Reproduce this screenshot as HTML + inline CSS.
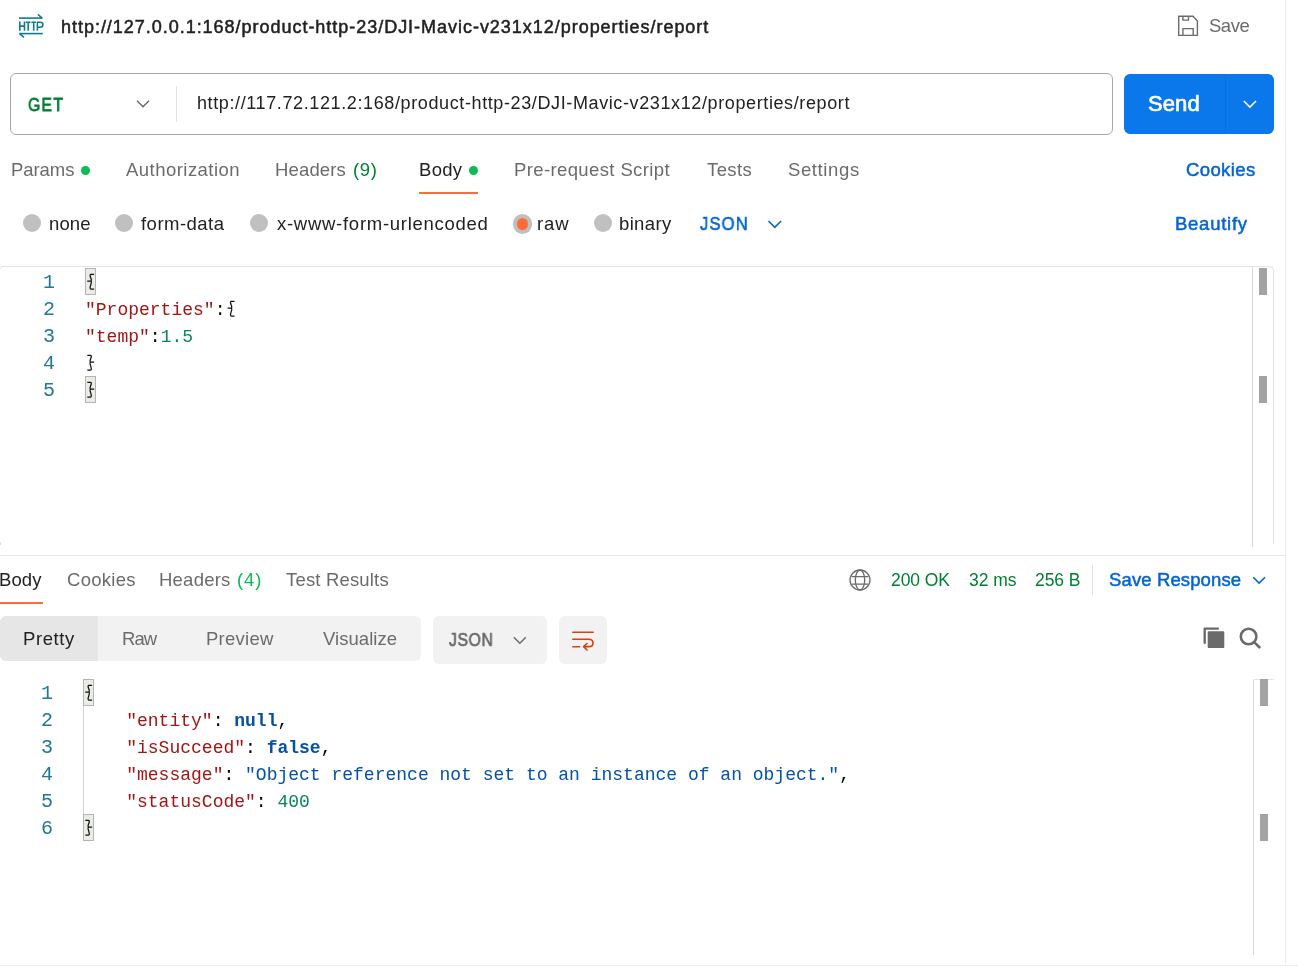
<!DOCTYPE html>
<html><head><meta charset="utf-8"><title>Postman</title><style>
html,body{margin:0;padding:0;}
body{width:1298px;height:969px;overflow:hidden;background:#fff;position:relative;font-family:'Liberation Sans',sans-serif;}
.a{position:absolute;white-space:pre;will-change:transform;}
.box{position:absolute;box-sizing:border-box;}
.code{position:absolute;font-family:'Liberation Mono',monospace;font-size:18px;line-height:27px;white-space:pre;color:#000;will-change:transform;}
.num{position:absolute;font-family:'Liberation Mono',monospace;font-size:20px;line-height:27px;white-space:pre;color:#237893;text-align:center;will-change:transform;}
.k{color:#a31515;}
.n{color:#098658;}
.s{color:#0451a5;}
.b{color:#0451a5;font-weight:bold;}
.br{position:absolute;background:#e9ede6;border:1px solid #b4b4b4;box-sizing:border-box;}
.dot{position:absolute;width:9px;height:9px;border-radius:50%;background:#0cbb52;}
.radio{position:absolute;width:18px;height:18px;border-radius:50%;background:#c0c0c0;}
svg{position:absolute;overflow:visible;}
</style></head><body>
<!-- right vertical divider -->
<div class="box" style="left:1285px;top:0;width:1px;height:965px;background:#ececec"></div>
<div class="box" style="left:0;top:965px;width:1298px;height:1px;background:#ececec"></div>

<!-- HTTP icon -->
<svg style="left:0;top:0" width="60" height="45" viewBox="0 0 60 45">
 <g fill="none" stroke="#0f7d8c" stroke-width="1.6" stroke-linecap="butt" stroke-linejoin="round">
  <path d="M19 18.1H42.3"/>
  <path d="M42.4 18.3L37.9 14.3"/>
  <path d="M42.8 33.6H19.5"/>
  <path d="M19.4 33.4L24 37.4"/>
  <path d="M19.8 21.4V30.8M24.5 21.4V30.8M19.8 26.1H24.5"/>
  <path d="M25.8 22.2H30.5M28.15 22.2V30.8"/>
  <path d="M31.4 22.2H36M33.7 22.2V30.8"/>
  <path d="M37.4 30.8V22.2H40.2Q42.9 22.2 42.9 24.7Q42.9 27.2 40.2 27.2H37.4"/>
 </g>
</svg>

<!-- Save icon -->
<svg style="left:0;top:0" width="1298" height="50">
 <g fill="none" stroke="#6b6b6b" stroke-width="1.4" stroke-linejoin="round">
  <path d="M1178.7 16.3H1193L1197.4 20.9V35.4H1178.7Z"/>
  <path d="M1182.9 16.3V20.1H1188.5V16.3"/>
  <path d="M1182.9 35.4V28.6H1193.2V35.4"/>
 </g>
</svg>

<!-- URL bar -->
<div class="box" style="left:10px;top:73px;width:1103px;height:62px;border:1px solid #a9a9a9;border-radius:6px"></div>
<svg style="left:0;top:0" width="300" height="140">
 <path d="M137 100.8L143 106.8L149 100.8" fill="none" stroke="#6b6b6b" stroke-width="1.5"/>
</svg>
<div class="box" style="left:176px;top:86px;width:1px;height:36px;background:#e3e3e3"></div>

<!-- Send button -->
<div class="box" style="left:1124px;top:74px;width:150px;height:60px;background:#0a77ea;border-radius:6px"></div>
<div class="box" style="left:1225px;top:74px;width:1px;height:60px;background:#1467c2;opacity:.55"></div>
<svg style="left:0;top:0" width="1298" height="140">
 <path d="M1243.8 101L1249.9 107.1L1256 101" fill="none" stroke="#fff" stroke-width="1.5"/>
</svg>

<!-- tab dots + underline -->
<div class="dot" style="left:81px;top:166px"></div>
<div class="dot" style="left:469px;top:166px"></div>
<div class="box" style="left:419px;top:192px;width:59px;height:2px;background:#ff6c37"></div>

<!-- radios -->
<div class="radio" style="left:23px;top:214px"></div>
<div class="radio" style="left:115px;top:214px"></div>
<div class="radio" style="left:250px;top:214px"></div>
<div class="radio" style="left:512.8px;top:214.2px;width:19.5px;height:19.5px"></div>
<div class="box" style="left:516.8px;top:218.2px;width:11.5px;height:11.5px;border-radius:50%;background:#ff6c37"></div>
<div class="radio" style="left:594px;top:214px"></div>
<svg style="left:0;top:0" width="900" height="260">
 <path d="M768.5 221L774.8 227.3L781.1 221" fill="none" stroke="#0265d2" stroke-width="1.6"/>
</svg>

<!-- request editor -->
<div class="box" style="left:-1px;top:266px;width:1275px;height:278px;border:1px solid #e4e4e4;border-bottom:none;border-radius:5px 5px 0 0"></div>
<div class="box" style="left:0;top:542px;width:1px;height:3px;background:#dcdcdc"></div>
<div class="box" style="left:1252px;top:267px;width:1px;height:280px;background:#d8d8d8"></div>
<div class="box" style="left:1259px;top:268px;width:8px;height:27px;background:#a3a3a3"></div>
<div class="box" style="left:1259px;top:376px;width:8px;height:27px;background:#a3a3a3"></div>
<div class="num" style="left:39.3px;top:268.9px;width:20px">1</div>
<div class="num" style="left:39.3px;top:295.9px;width:20px">2</div>
<div class="num" style="left:39.3px;top:322.9px;width:20px">3</div>
<div class="num" style="left:39.3px;top:349.9px;width:20px">4</div>
<div class="num" style="left:39.3px;top:376.9px;width:20px">5</div>
<div class="br" style="left:85px;top:268px;width:11px;height:27px"></div>
<div class="br" style="left:85px;top:376px;width:11px;height:27px"></div>

<div class="code" style="left:85.4px;top:269.9px"> 
<span class="k">"Properties"</span>: 
<span class="k">"temp"</span>:<span class="n">1.5</span>
 
 </div>

<!-- response divider -->
<div class="box" style="left:0;top:555px;width:1285px;height:1px;background:#e6e6e6"></div>
<div class="box" style="left:0;top:602px;width:43px;height:2px;background:#ff6c37"></div>

<!-- globe -->
<svg style="left:0;top:0" width="1298" height="700">
 <g fill="none" stroke="#6b6b6b" stroke-width="1.3">
  <circle cx="860" cy="580" r="10"/>
  <ellipse cx="860" cy="580" rx="4.7" ry="10"/>
  <path d="M851.5 576.6H868.5M851.5 584.2H868.5"/>
 </g>
</svg>
<div class="box" style="left:1092px;top:565px;width:1px;height:30px;background:#e3e3e3"></div>
<svg style="left:0;top:0" width="1298" height="700">
 <path d="M1253.2 577.2L1259.1 583.1L1265 577.2" fill="none" stroke="#0265d2" stroke-width="1.6"/>
</svg>

<!-- view segmented -->
<div class="box" style="left:0;top:616px;width:421px;height:45px;background:#f2f2f2;border-radius:6px"></div>
<div class="box" style="left:0;top:616px;width:98px;height:45px;background:#e6e6e6;border-radius:6px 0 0 6px"></div>
<div class="box" style="left:433px;top:616px;width:114px;height:48px;background:#f2f2f2;border-radius:6px"></div>
<svg style="left:0;top:0" width="1298" height="700">
 <path d="M513.8 637.2L519.8 643.2L525.8 637.2" fill="none" stroke="#6b6b6b" stroke-width="1.5"/>
</svg>
<div class="box" style="left:559px;top:616px;width:48px;height:48px;background:#f2f2f2;border-radius:6px"></div>
<svg style="left:0;top:0" width="1298" height="700">
 <g fill="none" stroke="#d4420f" stroke-width="1.6" stroke-linecap="round" stroke-linejoin="round">
  <path d="M572.8 632.3H593.2"/>
  <path d="M572.8 639.2H588.8Q593 639.2 593 642.9Q593 646.6 588.8 646.6H584"/>
  <path d="M587 643.5L583.6 646.6L587 650"/>
  <path d="M572.8 646.8H579.6"/>
 </g>
</svg>
<!-- copy + search -->
<svg style="left:0;top:0" width="1298" height="700">
 <g fill="#6b6b6b">
  <path d="M1203.5 628.8Q1203.5 627.5 1204.8 627.5H1218Q1219.1 627.5 1219.1 628.6Q1219.1 629.7 1218 629.7H1205.9V643Q1205.9 644.1 1204.7 644.1Q1203.5 644.1 1203.5 643Z"/>
  <rect x="1207.7" y="631.3" width="16.6" height="16.8" rx="1.2"/>
 </g>
 <g fill="none" stroke="#6b6b6b" stroke-width="2.6" stroke-linecap="round">
  <circle cx="1248.6" cy="636.5" r="7.8"/>
  <path d="M1254.4 642.4L1259.4 647.3"/>
 </g>
</svg>

<!-- response editor scrollbar -->
<div class="box" style="left:1253px;top:679px;width:1px;height:276px;background:#d8d8d8"></div>
<div class="box" style="left:1253px;top:679px;width:21px;height:1px;background:#e4e4e4"></div>
<div class="box" style="left:1260px;top:679px;width:8px;height:27px;background:#a3a3a3"></div>
<div class="box" style="left:1260px;top:814px;width:8px;height:27px;background:#a3a3a3"></div>
<div class="num" style="left:37.4px;top:679.9px;width:20px">1</div>
<div class="num" style="left:37.4px;top:706.9px;width:20px">2</div>
<div class="num" style="left:37.4px;top:733.9px;width:20px">3</div>
<div class="num" style="left:37.4px;top:760.9px;width:20px">4</div>
<div class="num" style="left:37.4px;top:787.9px;width:20px">5</div>
<div class="num" style="left:37.4px;top:814.9px;width:20px">6</div>
<div class="br" style="left:83px;top:679px;width:11px;height:27px"></div>
<div class="br" style="left:83px;top:814px;width:11px;height:27px"></div>
<div class="box" style="left:83px;top:706px;width:1px;height:108px;background:#d4d4d4"></div>
<div class="code" style="left:83.4px;top:680.9px"> 
    <span class="k">"entity"</span>: <span class="b">null</span>,
    <span class="k">"isSucceed"</span>: <span class="b">false</span>,
    <span class="k">"message"</span>: <span class="s">"Object reference not set to an instance of an object."</span>,
    <span class="k">"statusCode"</span>: <span class="n">400</span>
 </div>
<svg style="left:0;top:0" width="1298" height="969"><path d="M94.10 274.30H90.70Q89.90 274.30 90.20 276.30L91.30 279.50Q91.60 281.20 90.20 281.20H87.20M90.20 281.20Q91.60 281.20 91.30 282.90L90.20 286.90Q89.90 289.00 90.70 289.00H94.10M234.50 301.30H231.10Q230.30 301.30 230.60 303.30L231.70 306.50Q232.00 308.20 230.60 308.20H227.60M230.60 308.20Q232.00 308.20 231.70 309.90L230.60 313.90Q230.30 316.00 231.10 316.00H234.50M87.30 355.30H90.70Q91.50 355.30 91.20 357.30L90.10 360.50Q89.80 362.20 91.20 362.20H94.20M91.20 362.20Q89.80 362.20 90.10 363.90L91.20 367.90Q91.50 370.00 90.70 370.00H87.30M87.30 382.30H90.70Q91.50 382.30 91.20 384.30L90.10 387.50Q89.80 389.20 91.20 389.20H94.20M91.20 389.20Q89.80 389.20 90.10 390.90L91.20 394.90Q91.50 397.00 90.70 397.00H87.30M92.10 685.30H88.70Q87.90 685.30 88.20 687.30L89.30 690.50Q89.60 692.20 88.20 692.20H85.20M88.20 692.20Q89.60 692.20 89.30 693.90L88.20 697.90Q87.90 700.00 88.70 700.00H92.10M85.30 820.30H88.70Q89.50 820.30 89.20 822.30L88.10 825.50Q87.80 827.20 89.20 827.20H92.20M89.20 827.20Q87.80 827.20 88.10 828.90L89.20 832.90Q89.50 835.00 88.70 835.00H85.30" fill="none" stroke="#111" stroke-width="1.25" stroke-linecap="butt" stroke-linejoin="round"/></svg>

<div class="a" style="left:60.50px;top:17.70px;font-weight:400;-webkit-text-stroke:0.5px currentColor;font-size:18px;line-height:18px;color:#212121;letter-spacing:0.972px">http://127.0.0.1:168/product-http-23/DJI-Mavic-v231x12/properties/report</div>
<div class="a" style="left:1208.50px;top:16.90px;font-weight:400;font-size:18.5px;line-height:18.5px;color:#6b6b6b;letter-spacing:-0.500px">Save</div>
<div class="a" style="left:28.00px;top:95.00px;font-weight:400;-webkit-text-stroke:0.8px currentColor;font-size:19px;line-height:19px;color:#007f31;letter-spacing:1.584px;transform:scaleX(0.8300);transform-origin:0 0">GET</div>
<div class="a" style="left:196.60px;top:93.90px;font-weight:400;font-size:18px;line-height:18px;color:#212121;letter-spacing:0.614px">http://117.72.121.2:168/product-http-23/DJI-Mavic-v231x12/properties/report</div>
<div class="a" style="left:1147.80px;top:93.00px;font-weight:400;-webkit-text-stroke:0.7px currentColor;font-size:22px;line-height:22px;color:#ffffff;letter-spacing:0.100px">Send</div>
<div class="a" style="left:10.90px;top:161.00px;font-weight:400;font-size:18.5px;line-height:18.5px;color:#6b6b6b;letter-spacing:-0.060px">Params</div>
<div class="a" style="left:126.20px;top:161.00px;font-weight:400;font-size:18.5px;line-height:18.5px;color:#6b6b6b;letter-spacing:0.467px">Authorization</div>
<div class="a" style="left:275.00px;top:161.00px;font-weight:400;font-size:18.5px;line-height:18.5px;color:#6b6b6b;letter-spacing:0.150px">Headers</div>
<div class="a" style="left:353.00px;top:161.00px;font-weight:400;font-size:18.5px;line-height:18.5px;color:#007f31;letter-spacing:0.600px">(9)</div>
<div class="a" style="left:419.00px;top:161.00px;font-weight:400;font-size:18.5px;line-height:18.5px;color:#212121;letter-spacing:0.300px">Body</div>
<div class="a" style="left:514.00px;top:161.00px;font-weight:400;font-size:18.5px;line-height:18.5px;color:#6b6b6b;letter-spacing:0.382px">Pre-request Script</div>
<div class="a" style="left:707.10px;top:161.00px;font-weight:400;font-size:18.5px;line-height:18.5px;color:#6b6b6b;letter-spacing:0.375px">Tests</div>
<div class="a" style="left:787.60px;top:161.00px;font-weight:400;font-size:18.5px;line-height:18.5px;color:#6b6b6b;letter-spacing:0.614px">Settings</div>
<div class="a" style="left:1186.00px;top:161.00px;font-weight:400;-webkit-text-stroke:0.5px currentColor;font-size:18.5px;line-height:18.5px;color:#0265d2;letter-spacing:0.383px">Cookies</div>
<div class="a" style="left:48.50px;top:215.00px;font-weight:400;font-size:18.5px;line-height:18.5px;color:#212121;letter-spacing:0.133px">none</div>
<div class="a" style="left:141.00px;top:215.00px;font-weight:400;font-size:18.5px;line-height:18.5px;color:#212121;letter-spacing:0.475px">form-data</div>
<div class="a" style="left:276.60px;top:215.00px;font-weight:400;font-size:18.5px;line-height:18.5px;color:#212121;letter-spacing:0.725px">x-www-form-urlencoded</div>
<div class="a" style="left:537.10px;top:215.00px;font-weight:400;font-size:18.5px;line-height:18.5px;color:#212121;letter-spacing:0.900px">raw</div>
<div class="a" style="left:618.70px;top:215.00px;font-weight:400;font-size:18.5px;line-height:18.5px;color:#212121;letter-spacing:0.360px">binary</div>
<div class="a" style="left:699.90px;top:215.00px;font-weight:400;-webkit-text-stroke:0.6px currentColor;font-size:18.5px;line-height:18.5px;color:#0265d2;letter-spacing:1.222px;transform:scaleX(0.9000);transform-origin:0 0">JSON</div>
<div class="a" style="left:1174.60px;top:215.00px;font-weight:400;-webkit-text-stroke:0.5px currentColor;font-size:18.5px;line-height:18.5px;color:#0265d2;letter-spacing:0.743px">Beautify</div>
<div class="a" style="left:-0.70px;top:570.80px;font-weight:400;font-size:18.5px;line-height:18.5px;color:#212121;letter-spacing:0.100px">Body</div>
<div class="a" style="left:66.80px;top:570.80px;font-weight:400;font-size:18.5px;line-height:18.5px;color:#6b6b6b;letter-spacing:0.267px">Cookies</div>
<div class="a" style="left:159.20px;top:570.80px;font-weight:400;font-size:18.5px;line-height:18.5px;color:#6b6b6b;letter-spacing:0.233px">Headers</div>
<div class="a" style="left:236.90px;top:570.80px;font-weight:400;font-size:18.5px;line-height:18.5px;color:#0cbb52;letter-spacing:0.900px">(4)</div>
<div class="a" style="left:286.40px;top:570.80px;font-weight:400;font-size:18.5px;line-height:18.5px;color:#6b6b6b;letter-spacing:0.173px">Test Results</div>
<div class="a" style="left:891.30px;top:571.70px;font-weight:400;font-size:17.5px;line-height:17.5px;color:#007f31;letter-spacing:-0.100px">200 OK</div>
<div class="a" style="left:968.80px;top:571.70px;font-weight:400;font-size:17.5px;line-height:17.5px;color:#007f31;letter-spacing:-0.025px">32 ms</div>
<div class="a" style="left:1034.80px;top:571.70px;font-weight:400;font-size:17.5px;line-height:17.5px;color:#007f31;letter-spacing:-0.075px">256 B</div>
<div class="a" style="left:1108.70px;top:570.80px;font-weight:400;-webkit-text-stroke:0.5px currentColor;font-size:18.5px;line-height:18.5px;color:#0265d2;letter-spacing:0.125px">Save Response</div>
<div class="a" style="left:22.70px;top:629.80px;font-weight:400;font-size:18.5px;line-height:18.5px;color:#212121;letter-spacing:0.600px">Pretty</div>
<div class="a" style="left:122.40px;top:629.80px;font-weight:400;font-size:18.5px;line-height:18.5px;color:#6b6b6b;letter-spacing:-0.900px">Raw</div>
<div class="a" style="left:206.40px;top:629.80px;font-weight:400;font-size:18.5px;line-height:18.5px;color:#6b6b6b;letter-spacing:0.250px">Preview</div>
<div class="a" style="left:322.90px;top:629.80px;font-weight:400;font-size:18.5px;line-height:18.5px;color:#6b6b6b;letter-spacing:0.038px">Visualize</div>
<div class="a" style="left:448.70px;top:630.70px;font-weight:400;-webkit-text-stroke:0.7px currentColor;font-size:18.5px;line-height:18.5px;color:#6b6b6b;letter-spacing:0.765px;transform:scaleX(0.8500);transform-origin:0 0">JSON</div>
</body></html>
